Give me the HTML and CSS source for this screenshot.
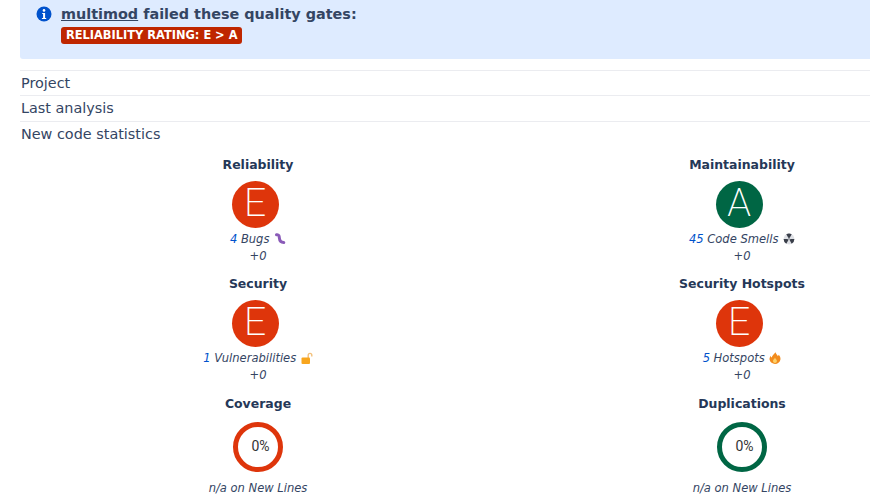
FILE: index.html

```html
<!DOCTYPE html>
<html lang="en">
<head>
  <meta charset="UTF-8" />
  <meta name="viewport" content="width=device-width, initial-scale=1.0"/>
  <title>Quality gate</title>
  <link rel="stylesheet" href="styles.css">
</head>
<body>
  <div class="page">
    <div class="alert">
      <svg class="info-icon" viewBox="0 0 16 16" width="16" height="16">
        <circle cx="8" cy="8" r="7.5" fill="#0052cc"/>
        <circle cx="8" cy="4.400" r="1.300" fill="#fff"/>
        <path d="M6.200 6.900h2.900v5h1.100v1.200H5.900v-1.200h1.200V8.100h-.9z" fill="#fff"/>
      </svg>
      <div>
        <div class="alert-title"><a href="#">multimod</a> failed these quality gates:</div>
        <span class="tag">RELIABILITY RATING: E &gt; A</span>
      </div>
    </div>

    <div class="row">Project</div>
    <div class="row">Last analysis</div>
    <div class="row">New code statistics</div>

    <div class="stats">
      <div class="stat">
        <h4>Reliability</h4>
        <div class="grade bad">E</div>
        <p><a href="#">4</a> Bugs
          <svg class="emoji" viewBox="0 0 12 12"><path d="M2.500 1.800C5 1.400 5.200 3 5.400 5.200 5.600 8 7 9.400 9.800 9.400" fill="none" stroke="#8a5bb8" stroke-width="3" stroke-linecap="round"/></svg>
        </p>
        <p>+0</p>
      </div>
      <div class="stat">
        <h4>Maintainability</h4>
        <div class="grade good">A</div>
        <p><a href="#">45</a> Code Smells
          <svg class="emoji" viewBox="0 0 12 12"><circle cx="6" cy="6" r="5.400" fill="#dfe1e6"/><path d="M6 6 3.300 1.300a5.400 5.400 0 0 1 5.400 0zM6 6h5.400a5.400 5.400 0 0 1-2.700 4.700zM6 6l-2.700 4.700A5.400 5.400 0 0 1 .6 6z" fill="#3a3f4a"/><circle cx="6" cy="6" r="1.300" fill="#dfe1e6"/><circle cx="6" cy="6" r=".7" fill="#3a3f4a"/></svg>
        </p>
        <p>+0</p>
      </div>
      <div class="stat">
        <h4>Security</h4>
        <div class="grade bad">E</div>
        <p><a href="#">1</a> Vulnerabilities
          <svg class="emoji" viewBox="0 0 12 12"><path d="M7.200 6V3.200c0-2.400 3.600-2.400 3.600 0v1.300" fill="none" stroke="#f3c07a" stroke-width="1.400"/><rect x=".5" y="5.500" width="8.500" height="6.500" rx="1" fill="#f8a61e"/></svg>
        </p>
        <p>+0</p>
      </div>
      <div class="stat">
        <h4>Security Hotspots</h4>
        <div class="grade bad">E</div>
        <p><a href="#">5</a> Hotspots
          <svg class="emoji" viewBox="0 0 12 12"><path d="M6.500 .2c.5 2 2 2.500 2.300 4 .6-.3.8-.9.8-1.400 1.400 1.400 2.200 3 1.800 4.900C10.900 10.200 8.500 11.900 6 11.900S1.100 10.200.6 7.800C.3 6.300.8 5 1.800 3.800c0 .9.300 1.500 1 1.800C3 3.500 4.800 2.300 6.500.2z" fill="#f28c1e"/><path d="M6 5.500c.3 1.300 1.900 2 1.900 3.600 0 1.200-.9 2-1.900 2s-2-.8-2-2c0-1.500 1.600-2.200 2-3.600z" fill="#fdd26a"/></svg>
        </p>
        <p>+0</p>
      </div>
      <div class="stat">
        <h4>Coverage</h4>
        <div class="ring ring-bad">0%</div>
        <p class="na">n/a on New Lines</p>
      </div>
      <div class="stat">
        <h4>Duplications</h4>
        <div class="ring ring-good">0%</div>
        <p class="na">n/a on New Lines</p>
      </div>
    </div>
  </div>
</body>
</html>
```

FILE: styles.css

```css
html, body {
  margin: 0;
  height: 100%;
  overflow: hidden;
}
body {
  background-color: white;
  font-family: "DejaVu Sans", sans-serif;
  color: #344563;
}
.page {
  width: 964px;
  margin-left: 20px;
}
.alert {
  display: flex;
  gap: 10px;
  height: 59px;
  box-sizing: border-box;
  padding: 5px 16px 0;
  background-color: #deebff;
  border-radius: 0 0 3px 3px;
  margin-bottom: 11px;
}
.info-icon {
  flex: none;
  margin-top: 1px;
}
.alert-title {
  font-size: 14.400px;
  font-weight: bold;
  line-height: 18px;
  margin-left: -1px;
}
.alert-title a {
  color: inherit;
}
.tag {
  display: inline-block;
  margin: 4px 0 0 -1px;
  padding: 0 5px;
  height: 17px;
  line-height: 16px;
  font-size: 11.400px;
  font-weight: bold;
  color: white;
  background-color: #bf2600;
  border-radius: 3px;
}
.row {
  height: 24.400px;
  padding-left: 1px;
  line-height: 25px;
  border-top: 1px solid #ebecf0;
  font-size: 14.400px;
}
.stats {
  display: grid;
  grid-template-columns: 484px 484px;
  margin-left: -4px;
  margin-top: 9.400px;
}
.stat {
  height: 119.600px;
  text-align: center;
}
.stat h4 {
  margin: 0;
  font-size: 12.480px;
  line-height: 17px;
  font-weight: bold;
  color: #253858;
}
.stat p {
  margin: 0;
  font-size: 11.520px;
  line-height: 17px;
  font-style: italic;
}
.stat p a {
  color: #0052cc;
  text-decoration: none;
}
.stat p.na {
  line-height: 13px;
}
.grade {
  width: 47px;
  height: 47px;
  margin: 8px 0 3px calc(50% - 26.500px);
  border-radius: 50%;
  color: white;
  font-family: Roboto, sans-serif;
  font-weight: 200;
  font-size: 39px;
  line-height: 45px;
}
.bad {
  background-color: #de350b;
}
.good {
  background-color: #006644;
}
.ring {
  width: 50px;
  height: 50px;
  box-sizing: border-box;
  margin: 10px auto 10.500px;
  padding-left: 5px;
  border-radius: 50%;
  border: 5px solid;
  font-family: Roboto, sans-serif;
  font-size: 14px;
  line-height: 39px;
  color: #333;
}
.ring-bad {
  border-color: #de350b;
}
.ring-good {
  border-color: #006644;
}
.emoji {
  width: 12px;
  height: 12px;
  margin-left: 1px;
  vertical-align: -2px;
}
```
